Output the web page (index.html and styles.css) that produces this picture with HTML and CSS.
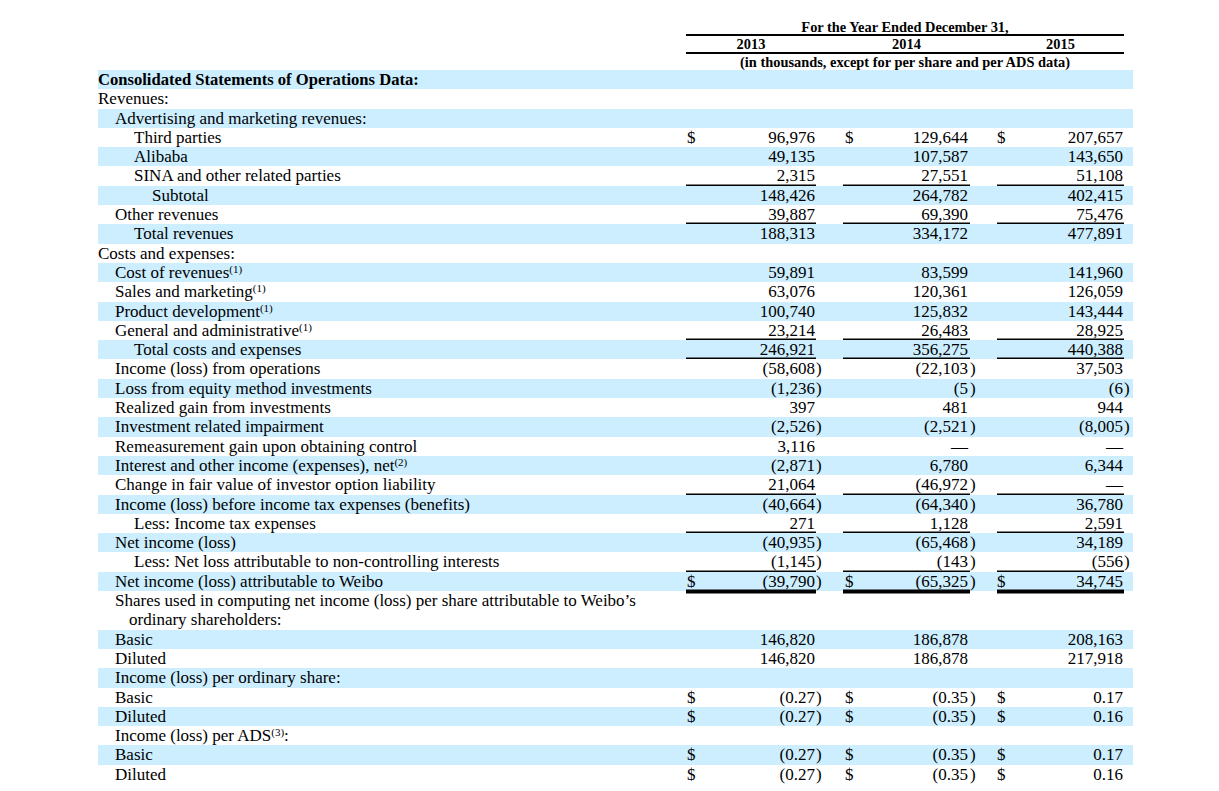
FILE: index.html
```html
<!DOCTYPE html>
<html lang="en">
<head>
<meta charset="utf-8">
<title>Selected Financial Data</title>
<link rel="stylesheet" href="styles.css">
</head>
<body>
<div class="page">
  <div class="head">
    <div class="head-block">
      <div class="head-title">For the Year Ended December 31,</div>
      <div class="head-years"><span>2013</span><span></span><span>2014</span><span></span><span>2015</span></div>
      <div class="head-note">(in thousands, except for per share and per ADS data)</div>
    </div>
  </div>

  <div class="table">
    <div class="row"><div class="lbl b">Consolidated Statements of Operations Data:</div></div>
    <div class="row"><div class="lbl">Revenues:</div></div>
    <div class="row"><div class="lbl i1">Advertising and marketing revenues:</div></div>
    <div class="row"><div class="lbl i2">Third parties</div><span class="d">$</span><span class="n">96,976</span><span class="p"></span><span class="d">$</span><span class="n">129,644</span><span class="p"></span><span class="d">$</span><span class="n">207,657</span><span class="p"></span></div>
    <div class="row"><div class="lbl i2">Alibaba</div><span class="d"></span><span class="n">49,135</span><span class="p"></span><span class="d"></span><span class="n">107,587</span><span class="p"></span><span class="d"></span><span class="n">143,650</span><span class="p"></span></div>
    <div class="row u"><div class="lbl i2">SINA and other related parties</div><span class="d"></span><span class="n">2,315</span><span class="p"></span><span class="d"></span><span class="n">27,551</span><span class="p"></span><span class="d"></span><span class="n">51,108</span><span class="p"></span></div>
    <div class="row"><div class="lbl i3">Subtotal</div><span class="d"></span><span class="n">148,426</span><span class="p"></span><span class="d"></span><span class="n">264,782</span><span class="p"></span><span class="d"></span><span class="n">402,415</span><span class="p"></span></div>
    <div class="row u"><div class="lbl i1">Other revenues</div><span class="d"></span><span class="n">39,887</span><span class="p"></span><span class="d"></span><span class="n">69,390</span><span class="p"></span><span class="d"></span><span class="n">75,476</span><span class="p"></span></div>
    <div class="row"><div class="lbl i2">Total revenues</div><span class="d"></span><span class="n">188,313</span><span class="p"></span><span class="d"></span><span class="n">334,172</span><span class="p"></span><span class="d"></span><span class="n">477,891</span><span class="p"></span></div>
    <div class="row"><div class="lbl">Costs and expenses:</div></div>
    <div class="row"><div class="lbl i1">Cost of revenues<sup>(1)</sup></div><span class="d"></span><span class="n">59,891</span><span class="p"></span><span class="d"></span><span class="n">83,599</span><span class="p"></span><span class="d"></span><span class="n">141,960</span><span class="p"></span></div>
    <div class="row"><div class="lbl i1">Sales and marketing<sup>(1)</sup></div><span class="d"></span><span class="n">63,076</span><span class="p"></span><span class="d"></span><span class="n">120,361</span><span class="p"></span><span class="d"></span><span class="n">126,059</span><span class="p"></span></div>
    <div class="row"><div class="lbl i1">Product development<sup>(1)</sup></div><span class="d"></span><span class="n">100,740</span><span class="p"></span><span class="d"></span><span class="n">125,832</span><span class="p"></span><span class="d"></span><span class="n">143,444</span><span class="p"></span></div>
    <div class="row u"><div class="lbl i1">General and administrative<sup>(1)</sup></div><span class="d"></span><span class="n">23,214</span><span class="p"></span><span class="d"></span><span class="n">26,483</span><span class="p"></span><span class="d"></span><span class="n">28,925</span><span class="p"></span></div>
    <div class="row u"><div class="lbl i2">Total costs and expenses</div><span class="d"></span><span class="n">246,921</span><span class="p"></span><span class="d"></span><span class="n">356,275</span><span class="p"></span><span class="d"></span><span class="n">440,388</span><span class="p"></span></div>
    <div class="row"><div class="lbl i1">Income (loss) from operations</div><span class="d"></span><span class="n">(58,608</span><span class="p">)</span><span class="d"></span><span class="n">(22,103</span><span class="p">)</span><span class="d"></span><span class="n">37,503</span><span class="p"></span></div>
    <div class="row"><div class="lbl i1">Loss from equity method investments</div><span class="d"></span><span class="n">(1,236</span><span class="p">)</span><span class="d"></span><span class="n">(5</span><span class="p">)</span><span class="d"></span><span class="n">(6</span><span class="p">)</span></div>
    <div class="row"><div class="lbl i1">Realized gain from investments</div><span class="d"></span><span class="n">397</span><span class="p"></span><span class="d"></span><span class="n">481</span><span class="p"></span><span class="d"></span><span class="n">944</span><span class="p"></span></div>
    <div class="row"><div class="lbl i1">Investment related impairment</div><span class="d"></span><span class="n">(2,526</span><span class="p">)</span><span class="d"></span><span class="n">(2,521</span><span class="p">)</span><span class="d"></span><span class="n">(8,005</span><span class="p">)</span></div>
    <div class="row"><div class="lbl i1">Remeasurement gain upon obtaining control</div><span class="d"></span><span class="n">3,116</span><span class="p"></span><span class="d"></span><span class="n">&mdash;</span><span class="p"></span><span class="d"></span><span class="n">&mdash;</span><span class="p"></span></div>
    <div class="row"><div class="lbl i1">Interest and other income (expenses), net<sup>(2)</sup></div><span class="d"></span><span class="n">(2,871</span><span class="p">)</span><span class="d"></span><span class="n">6,780</span><span class="p"></span><span class="d"></span><span class="n">6,344</span><span class="p"></span></div>
    <div class="row u"><div class="lbl i1">Change in fair value of investor option liability</div><span class="d"></span><span class="n">21,064</span><span class="p"></span><span class="d"></span><span class="n">(46,972</span><span class="p">)</span><span class="d"></span><span class="n">&mdash;</span><span class="p"></span></div>
    <div class="row"><div class="lbl i1">Income (loss) before income tax expenses (benefits)</div><span class="d"></span><span class="n">(40,664</span><span class="p">)</span><span class="d"></span><span class="n">(64,340</span><span class="p">)</span><span class="d"></span><span class="n">36,780</span><span class="p"></span></div>
    <div class="row u"><div class="lbl i2">Less: Income tax expenses</div><span class="d"></span><span class="n">271</span><span class="p"></span><span class="d"></span><span class="n">1,128</span><span class="p"></span><span class="d"></span><span class="n">2,591</span><span class="p"></span></div>
    <div class="row"><div class="lbl i1">Net income (loss)</div><span class="d"></span><span class="n">(40,935</span><span class="p">)</span><span class="d"></span><span class="n">(65,468</span><span class="p">)</span><span class="d"></span><span class="n">34,189</span><span class="p"></span></div>
    <div class="row u"><div class="lbl i2">Less: Net loss attributable to non-controlling interests</div><span class="d"></span><span class="n">(1,145</span><span class="p">)</span><span class="d"></span><span class="n">(143</span><span class="p">)</span><span class="d"></span><span class="n">(556</span><span class="p">)</span></div>
    <div class="row dbl"><div class="lbl i1">Net income (loss) attributable to Weibo</div><span class="d">$</span><span class="n">(39,790</span><span class="p">)</span><span class="d">$</span><span class="n">(65,325</span><span class="p">)</span><span class="d">$</span><span class="n">34,745</span><span class="p"></span></div>
    <div class="row tall"><div class="lbl i1 hang">Shares used in computing net income (loss) per share attributable to Weibo&rsquo;s<br>ordinary shareholders:</div></div>
    <div class="row"><div class="lbl i1">Basic</div><span class="d"></span><span class="n">146,820</span><span class="p"></span><span class="d"></span><span class="n">186,878</span><span class="p"></span><span class="d"></span><span class="n">208,163</span><span class="p"></span></div>
    <div class="row"><div class="lbl i1">Diluted</div><span class="d"></span><span class="n">146,820</span><span class="p"></span><span class="d"></span><span class="n">186,878</span><span class="p"></span><span class="d"></span><span class="n">217,918</span><span class="p"></span></div>
    <div class="row"><div class="lbl i1">Income (loss) per ordinary share:</div></div>
    <div class="row"><div class="lbl i1">Basic</div><span class="d">$</span><span class="n">(0.27</span><span class="p">)</span><span class="d">$</span><span class="n">(0.35</span><span class="p">)</span><span class="d">$</span><span class="n">0.17</span><span class="p"></span></div>
    <div class="row"><div class="lbl i1">Diluted</div><span class="d">$</span><span class="n">(0.27</span><span class="p">)</span><span class="d">$</span><span class="n">(0.35</span><span class="p">)</span><span class="d">$</span><span class="n">0.16</span><span class="p"></span></div>
    <div class="row"><div class="lbl i1">Income (loss) per ADS<sup>(3)</sup>:</div></div>
    <div class="row"><div class="lbl i1">Basic</div><span class="d">$</span><span class="n">(0.27</span><span class="p">)</span><span class="d">$</span><span class="n">(0.35</span><span class="p">)</span><span class="d">$</span><span class="n">0.17</span><span class="p"></span></div>
    <div class="row"><div class="lbl i1">Diluted</div><span class="d">$</span><span class="n">(0.27</span><span class="p">)</span><span class="d">$</span><span class="n">(0.35</span><span class="p">)</span><span class="d">$</span><span class="n">0.16</span><span class="p"></span></div>
  </div>
</div>
</body>
</html>
```

FILE: styles.css
```css
* {
  box-sizing: border-box;
  margin: 0;
  padding: 0;
}

html, body {
  background: #ffffff;
}

body {
  margin: 0;
  color: #000000;
  font-family: "Liberation Serif", "Times New Roman", serif;
}

.page {
  width: 1219px;
  padding: 18px 0 0 98px;
}

/* ---------- column header ---------- */
.head {
  display: grid;
  grid-template-columns: 588px 438px;
  font-weight: bold;
  font-size: 14.4px;
  line-height: 16px;
  text-align: center;
}

.head-block {
  grid-column: 2;
}

.head-title {
  height: 18px;
  padding-top: 1px;
  border-bottom: 2px solid #000;
}

.head-years {
  display: grid;
  grid-template-columns: 130px 27px 127px 27px 127px;
  height: 18px;
  border-bottom: 2px solid #000;
}

.head-note {
  height: 16px;
}

/* ---------- data table ---------- */
.table {
  width: 1035px;
  font-size: 17px;
  line-height: 19.3px;
}

.row {
  display: grid;
  grid-template-columns: 588px 14px 116px 27px 14px 113px 27px 14px 113px 9px;
  height: 19.3px;
}

.row:nth-child(odd) {
  background: #cceeff;
}

.row.tall {
  height: 38.6px;
}

.lbl {
  white-space: nowrap;
}

.b {
  font-weight: bold;
  font-size: 16.6px;
}

.i1 { padding-left: 17px; }
.i2 { padding-left: 36px; }
.i3 { padding-left: 54px; }

.hang {
  padding-left: 31px;
  text-indent: -14px;
}

.d {
  text-align: left;
  padding-left: 1px;
}

.n {
  text-align: right;
  padding-right: 1px;
  white-space: nowrap;
}

.p {
  text-align: left;
}

.row > :nth-child(5) { padding-left: 2px; }
.row > :nth-child(6) { padding-right: 2px; }
.row > :nth-child(8) { padding-left: 0; }

.u .d,
.u .n {
  box-shadow: inset 0 -1.6px 0 #000;
}

.dbl .d,
.dbl .n {
  box-shadow: inset 0 -1.6px 0 #000, 0 2.5px 0 #000;
}

sup {
  font-size: 11px;
  line-height: 0;
  vertical-align: 5px;
}
```
